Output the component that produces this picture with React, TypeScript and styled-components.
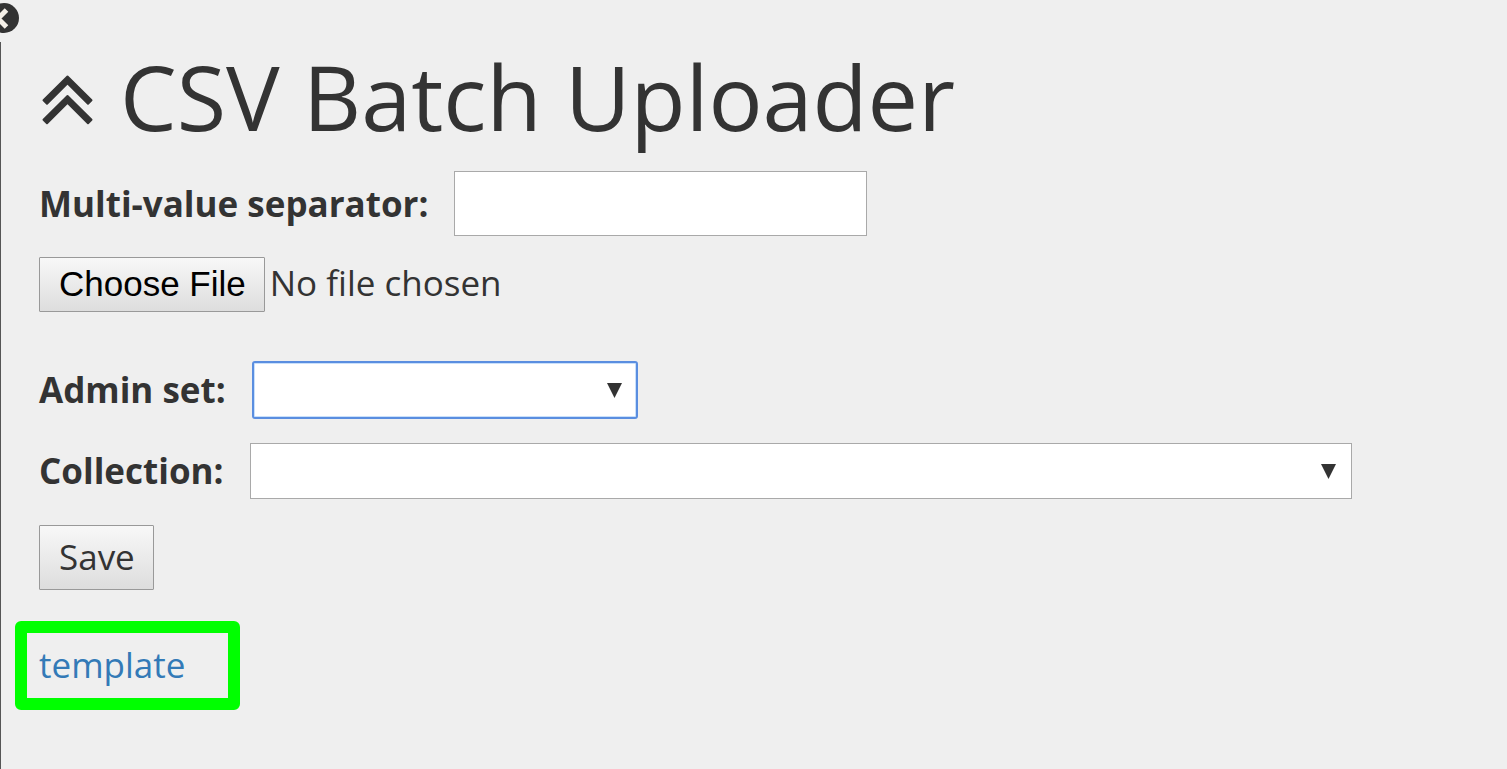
import React from "react";
import styled, { createGlobalStyle, css } from "styled-components";

const GlobalStyle = createGlobalStyle`
  *, *::before, *::after { box-sizing: border-box; }
  html, body, #root { min-height: 100vh; }
  body {
    margin: 0;
    background: #efefef;
    color: #333;
    font-family: "Open Sans", "Noto Sans", sans-serif;
    font-size: 35px;
    line-height: 50px;
    overflow-x: hidden;
  }
`;

const Page = styled.div`
  position: relative;
  display: flex;
  flex-direction: column;
  min-height: 100vh;
  padding-top: 42px;
`;

const SidebarToggle = styled.button`
  position: absolute;
  top: 3px;
  left: -11px;
  width: 30px;
  height: 30px;
  padding: 0;
  border: 0;
  background: none;
  color: #333;
  cursor: pointer;

  svg { display: block; }
`;

const Content = styled.main`
  flex: 1;
  padding: 5px 38px 38px;
  border-left: 1px solid #555;
`;

const Title = styled.h1`
  display: flex;
  align-items: center;
  gap: 24px;
  margin: 0 0 25px;
  font-size: 90px;
  font-weight: 400;
  line-height: 99px;
`;

const Form = styled.form`
  display: flex;
  flex-direction: column;
  align-items: flex-start;
`;

const Row = styled.div<{ $gap: number }>`
  display: flex;
  align-items: center;
  max-width: 100%;
  margin-bottom: ${(p) => p.$gap}px;
`;

const Label = styled.label`
  flex: none;
  margin-right: 26px;
  font-weight: 700;
`;

const TextInput = styled.input`
  width: 413px;
  height: 65px;
  min-width: 0;
  padding: 2px 5px;
  border: 1px solid #a9a9a9;
  border-radius: 0;
  background: #fff;
  color: inherit;
  font: inherit;
  outline: none;
`;

const raised = css`
  border: 1px solid #999;
  border-radius: 1px;
  background: linear-gradient(#f8f8f8, #ddd);
  cursor: pointer;
`;

const FileInput = styled.input`
  height: 57px;
  color: inherit;
  font: inherit;
  line-height: 55px;

  &::file-selector-button {
    ${raised}
    height: 55px;
    margin: 0 5px 0 0;
    padding: 0 18px 0 19px;
    color: #000;
    font: 35px/50px "Liberation Sans", Arial, sans-serif;
  }
`;

const SelectBox = styled.div<{ $width: number }>`
  position: relative;
  width: ${(p) => p.$width}px;
  min-width: 0;

  svg {
    position: absolute;
    top: 50%;
    right: 16px;
    margin-top: -7px;
    pointer-events: none;
  }
`;

const Select = styled.select<{ $active?: boolean }>`
  display: block;
  width: 100%;
  height: ${(p) => (p.$active ? 58 : 56)}px;
  padding: 0 40px 0 10px;
  appearance: none;
  border: ${(p) => (p.$active ? "2px solid #5a8ee0" : "1px solid #a9a9a9")};
  border-radius: ${(p) => (p.$active ? 3 : 0)}px;
  box-shadow: ${(p) => (p.$active ? "inset 0 0 0 1px #c9e0fb" : "none")};
  background: #fff;
  color: inherit;
  font: inherit;
  outline: none;
`;

const SaveButton = styled.button`
  ${raised}
  height: 65px;
  padding: 0 18px 2px 19px;
  color: inherit;
  font: inherit;
`;

const Highlight = styled.div`
  width: 225px;
  margin-left: -24px;
  padding: 7px 12px 8px;
  border: 12px solid #0f0;
  border-radius: 6px;
`;

const TemplateLink = styled.a`
  display: block;
  color: #337ab7;
  text-decoration: none;
`;

const Arrow = () => (
  <svg width="15" height="15" viewBox="0 0 15 15" aria-hidden="true">
    <path d="M0 0H15L7.5 15Z" fill="#333" />
  </svg>
);

const DoubleUpIcon = () => (
  <svg width="57" height="58" viewBox="39 68 57 58" aria-hidden="true">
    <g fill="#333" stroke="#333" strokeWidth="2" strokeLinejoin="round">
      <path d="M67.5 76.5L91.5 100.3L88 103.8L67.5 83.4L47 103.8L43.5 100.3Z" />
      <path d="M67.5 96L91.5 119.8L88 123.3L67.5 102.9L47 123.3L43.5 119.8Z" />
    </g>
  </svg>
);

export default function App() {
  return (
    <>
      <GlobalStyle />
      <Page>
        <SidebarToggle type="button" aria-label="Collapse sidebar">
          <svg width="30" height="30" viewBox="0 0 30 30">
            <circle cx="15" cy="15" r="15" fill="currentColor" />
            <path d="M17.5 7L9 15.5L17.5 24" fill="none" stroke="#f5f0e8" strokeWidth="5" />
          </svg>
        </SidebarToggle>
        <Content>
          <Title>
            <DoubleUpIcon />
            CSV Batch Uploader
          </Title>
          <Form onSubmit={(e) => e.preventDefault()}>
            <Row $gap={19}>
              <Label htmlFor="separator">Multi-value separator:</Label>
              <TextInput id="separator" type="text" />
            </Row>
            <Row $gap={49}>
              <FileInput type="file" accept=".csv" aria-label="CSV file" />
            </Row>
            <Row $gap={24}>
              <Label htmlFor="admin-set">Admin set:</Label>
              <SelectBox $width={386}>
                <Select id="admin-set" $active>
                  <option value="" />
                </Select>
                <Arrow />
              </SelectBox>
            </Row>
            <Row $gap={26}>
              <Label htmlFor="collection">Collection:</Label>
              <SelectBox $width={1102}>
                <Select id="collection">
                  <option value="" />
                </Select>
                <Arrow />
              </SelectBox>
            </Row>
            <Row $gap={31}>
              <SaveButton type="submit">Save</SaveButton>
            </Row>
          </Form>
          <Highlight>
            <TemplateLink href="#template">template</TemplateLink>
          </Highlight>
        </Content>
      </Page>
    </>
  );
}
